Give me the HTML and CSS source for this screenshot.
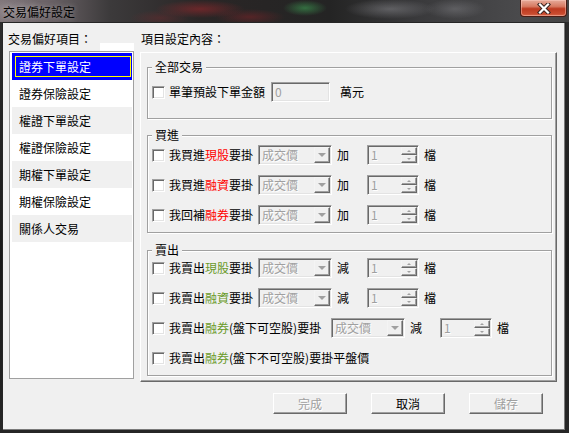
FILE: index.html
```html
<!DOCTYPE html>
<html lang="zh-Hant">
<head>
<meta charset="utf-8">
<title>交易偏好設定</title>
<link rel="stylesheet" href="styles.css">
</head>
<body>
<div class="screen">
  <div class="titlebar">
    <span class="title">交易偏好設定</span>
    <div class="close">
      <svg width="14" height="11" viewBox="0 0 14 11">
        <path d="M3 1.5 L11 9.5 M11 1.5 L3 9.5" stroke="#3a2420" stroke-width="4.2" stroke-linecap="square" fill="none"/>
        <path d="M3 1.5 L11 9.5 M11 1.5 L3 9.5" stroke="#ffffff" stroke-width="2.2" stroke-linecap="square" fill="none"/>
      </svg>
    </div>
  </div>
  <div class="window">
    <div class="main">
      <div class="col-left">
        <div class="head-left">
          <span class="col-label left-label">交易偏好項目：</span>
          <span class="patch"></span>
        </div>
        <ul class="list">
          <li class="item sel"><span>證券下單設定</span></li>
          <li class="item">證券保險設定</li>
          <li class="item alt">權證下單設定</li>
          <li class="item">權證保險設定</li>
          <li class="item alt">期權下單設定</li>
          <li class="item">期權保險設定</li>
          <li class="item alt">關係人交易</li>
        </ul>
      </div>
      <div class="col-right">
        <div class="head-right">
          <span class="col-label">項目設定內容：</span>
        </div>
        <div class="panel">
          <div class="group g1">
            <span class="legend">全部交易</span>
            <div class="rows">
              <div class="row">
                <span class="cb"></span>
                <span class="lbl w0">單筆預設下單金額</span>
                <span class="field money">0</span>
                <span class="lbl">萬元</span>
              </div>
            </div>
          </div>
          <div class="group g2">
            <span class="legend">買進</span>
            <div class="rows">
              <div class="row">
                <span class="cb"></span>
                <span class="lbl w1">我買進<em class="red">現股</em>要掛</span>
                <span class="combo"><span class="ctext">成交價</span><span class="arrow"><i class="tri"></i></span></span>
                <span class="op">加</span>
                <span class="spin"><span class="stext">1</span><span class="sbtns"><span class="sb"><i class="tri-s up"></i></span><span class="sb"><i class="tri-s"></i></span></span></span>
                <span class="lbl">檔</span>
              </div>
              <div class="row">
                <span class="cb"></span>
                <span class="lbl w1">我買進<em class="red">融資</em>要掛</span>
                <span class="combo"><span class="ctext">成交價</span><span class="arrow"><i class="tri"></i></span></span>
                <span class="op">加</span>
                <span class="spin"><span class="stext">1</span><span class="sbtns"><span class="sb"><i class="tri-s up"></i></span><span class="sb"><i class="tri-s"></i></span></span></span>
                <span class="lbl">檔</span>
              </div>
              <div class="row">
                <span class="cb"></span>
                <span class="lbl w1">我回補<em class="red">融券</em>要掛</span>
                <span class="combo"><span class="ctext">成交價</span><span class="arrow"><i class="tri"></i></span></span>
                <span class="op">加</span>
                <span class="spin"><span class="stext">1</span><span class="sbtns"><span class="sb"><i class="tri-s up"></i></span><span class="sb"><i class="tri-s"></i></span></span></span>
                <span class="lbl">檔</span>
              </div>
            </div>
          </div>
          <div class="group g3">
            <span class="legend">賣出</span>
            <div class="rows">
              <div class="row">
                <span class="cb"></span>
                <span class="lbl w1">我賣出<em class="green">現股</em>要掛</span>
                <span class="combo"><span class="ctext">成交價</span><span class="arrow"><i class="tri"></i></span></span>
                <span class="op">減</span>
                <span class="spin"><span class="stext">1</span><span class="sbtns"><span class="sb"><i class="tri-s up"></i></span><span class="sb"><i class="tri-s"></i></span></span></span>
                <span class="lbl">檔</span>
              </div>
              <div class="row">
                <span class="cb"></span>
                <span class="lbl w1">我賣出<em class="green">融資</em>要掛</span>
                <span class="combo"><span class="ctext">成交價</span><span class="arrow"><i class="tri"></i></span></span>
                <span class="op">減</span>
                <span class="spin"><span class="stext">1</span><span class="sbtns"><span class="sb"><i class="tri-s up"></i></span><span class="sb"><i class="tri-s"></i></span></span></span>
                <span class="lbl">檔</span>
              </div>
              <div class="row">
                <span class="cb"></span>
                <span class="lbl w2">我賣出<em class="green">融券</em>(盤下可空股)要掛</span>
                <span class="combo"><span class="ctext">成交價</span><span class="arrow"><i class="tri"></i></span></span>
                <span class="op">減</span>
                <span class="spin"><span class="stext">1</span><span class="sbtns"><span class="sb"><i class="tri-s up"></i></span><span class="sb"><i class="tri-s"></i></span></span></span>
                <span class="lbl">檔</span>
              </div>
              <div class="row">
                <span class="cb"></span>
                <span class="lbl">我賣出<em class="green">融券</em>(盤下不可空股)要掛平盤價</span>
              </div>
            </div>
          </div>
        </div>
      </div>
    </div>
    <div class="buttons">
      <span class="btn disabled">完成</span>
      <span class="btn">取消</span>
      <span class="btn disabled">儲存</span>
    </div>
  </div>
</div>
</body>
</html>
```

FILE: styles.css
```css
* { box-sizing: border-box; margin: 0; padding: 0; }

body {
  margin: 0;
  background: #1b1b1b;
  font-family: "Noto Sans CJK TC", "Liberation Sans", sans-serif;
  font-size: 12px;
  color: #000;
}

.screen {
  width: 569px;
  height: 433px;
  overflow: hidden;
  background: linear-gradient(180deg, #2e2e2e 0, #1a1a1a 60%, #262626 100%);
}

.titlebar {
  height: 22px;
  display: flex;
  justify-content: space-between;
  align-items: flex-start;
  background:
    radial-gradient(ellipse 45px 9px at 200px 9px, rgba(160, 40, 45, 0.55), transparent),
    radial-gradient(ellipse 35px 8px at 250px 17px, rgba(140, 35, 40, 0.45), transparent),
    radial-gradient(ellipse 30px 8px at 160px 18px, rgba(130, 40, 45, 0.35), transparent),
    radial-gradient(ellipse 22px 8px at 305px 8px, rgba(60, 150, 80, 0.65), transparent),
    radial-gradient(ellipse 45px 10px at 390px 9px, rgba(150, 150, 155, 0.45), transparent),
    radial-gradient(ellipse 30px 10px at 455px 9px, rgba(140, 140, 145, 0.4), transparent),
    radial-gradient(ellipse 40px 12px at 10px 10px, rgba(160, 150, 155, 0.5), transparent),
    linear-gradient(90deg, #7e7478 0, #6a6266 50px, #3c3a3b 110px, #2a2626 200px, #242424 330px, #3a3a3c 420px, #4a4a4c 520px, #444 569px);
}

.title {
  margin: 4px 0 0 3px;
  line-height: 15px;
  color: #000;
  text-shadow: 0 0 5px rgba(220, 220, 220, 0.55);
}

.close {
  width: 47px;
  height: 17px;
  margin-right: 2px;
  border: 1px solid #4a1c14;
  border-top: none;
  border-radius: 0 0 4px 4px;
  background: linear-gradient(180deg, #e6ab9a 0, #d77a62 40%, #bd3a20 55%, #c84a2e 85%, #d8674a 100%);
  box-shadow: inset 0 0 0 1px rgba(255, 210, 200, 0.45);
  display: flex;
  align-items: center;
  justify-content: center;
}

.window {
  margin-left: 2px;
  width: 564px;
  height: 409px;
  background: #f0f0f0;
  border: 1px solid #262626;
  box-shadow: inset -1px -1px 0 #7a7a7a;
  display: flex;
  flex-direction: column;
}

.main {
  display: flex;
  gap: 6px;
  padding: 9px 0 0 6px;
}

.col-left { width: 125px; }
.col-right { width: 417px; }

.head-left {
  display: flex;
  justify-content: space-between;
  height: 19px;
}

.head-right {
  height: 20px;
  padding-left: 1px;
}

.col-label {
  display: block;
  height: 14px;
  line-height: 14px;
  white-space: nowrap;
}

.left-label { margin-left: -1px; }

.patch {
  width: 34px;
  height: 8px;
  background: #fff;
  align-self: flex-end;
}

.list {
  list-style: none;
  height: 328px;
  border: 1px solid #a0a0a0;
  background: #fff;
  padding: 1px 1px 0 2px;
}

.item {
  height: 27px;
  line-height: 27px;
  padding-left: 7px;
  white-space: nowrap;
}

.item.alt { background: #f0f0f0; }

.item.sel {
  background: #0000ff;
  color: #fff;
  padding: 3px 1px 3px 3px;
}

.item.sel span {
  display: block;
  height: 21px;
  line-height: 19px;
  border: 1px solid #ffff00;
  padding-left: 3px;
}

.panel {
  height: 330px;
  border: 1px solid;
  border-color: #ffffff #696969 #696969 #ffffff;
  box-shadow: inset -1px -1px 0 #a0a0a0;
  padding: 0 4px 0 6px;
}

.group {
  width: 405px;
  border: 1px solid #a0a0a0;
  box-shadow: inset 1px 1px 0 #fff, 1px 1px 0 #fff;
}

.g1 { margin-top: 14px; height: 52px; }
.g2 { margin-top: 16px; height: 98px; }
.g3 { margin-top: 17px; height: 126px; }

.legend {
  display: block;
  width: max-content;
  height: 14px;
  line-height: 14px;
  margin: -8px 0 0 4px;
  padding: 0 3px;
  background: #f0f0f0;
}

.rows {
  display: flex;
  flex-direction: column;
  gap: 10px;
  padding-left: 4px;
}

.g1 .rows { margin-top: 8px; }
.g2 .rows { margin-top: 3px; }
.g3 .rows { margin-top: 1px; }

.row {
  display: flex;
  align-items: center;
  height: 20px;
}

.cb {
  width: 13px;
  height: 13px;
  margin-right: 4px;
  background: #fff;
  border: 1px solid;
  border-color: #a0a0a0 #ffffff #ffffff #a0a0a0;
  box-shadow: inset 1px 1px 0 #696969, inset -1px -1px 0 #e3e3e3;
}

.lbl {
  line-height: 14px;
  white-space: nowrap;
}

.lbl em { font-style: normal; }
.red { color: #ff0000; }
.green { color: #6a9a2a; }

.w0 { width: 102px; }
.w1 { width: 89px; }
.w2 { width: 162px; }

.field,
.combo,
.spin {
  height: 20px;
  background: #f0f0f0;
  border: 1px solid;
  border-color: #a0a0a0 #ffffff #ffffff #a0a0a0;
  box-shadow: inset 1px 1px 0 #696969, inset -1px -1px 0 #e3e3e3;
  padding: 1px;
  display: flex;
  align-items: stretch;
  color: #a0a0a0;
  line-height: 16px;
}

.money {
  width: 59px;
  margin-right: 10px;
  padding-left: 3px;
}

.combo {
  width: 74px;
  margin-right: 5px;
}

.ctext {
  flex: 1;
  padding-left: 2px;
  line-height: 16px;
  font-size: 12px;
  text-shadow: 1px 1px 0 #fff;
}

.arrow {
  width: 16px;
  border: 1px solid;
  border-color: #f4f4f4 #696969 #696969 #f4f4f4;
  box-shadow: inset -1px -1px 0 #a0a0a0;
  background: #f0f0f0;
  display: flex;
  align-items: center;
  justify-content: center;
}

.tri {
  display: block;
  width: 0;
  height: 0;
  border-left: 4px solid transparent;
  border-right: 4px solid transparent;
  border-top: 4px solid #a0a0a0;
}

.op {
  width: 30px;
  line-height: 14px;
}

.spin {
  width: 52px;
  margin-right: 5px;
}

.stext {
  flex: 1;
  padding-left: 2px;
  text-shadow: 1px 1px 0 #fff;
}

.sbtns {
  width: 16px;
  display: flex;
  flex-direction: column;
}

.sb {
  flex: 1;
  border: 1px solid;
  border-color: #f4f4f4 #696969 #696969 #f4f4f4;
  box-shadow: inset -1px -1px 0 #a0a0a0;
  background: #f0f0f0;
  display: flex;
  align-items: center;
  justify-content: center;
}

.tri-s {
  display: block;
  width: 0;
  height: 0;
  border-left: 2px solid transparent;
  border-right: 2px solid transparent;
  border-top: 2px solid #a0a0a0;
}

.tri-s.up {
  border-top: none;
  border-bottom: 2px solid #a0a0a0;
}

.buttons {
  display: flex;
  justify-content: flex-end;
  gap: 24px;
  padding-right: 22px;
  margin-top: 11px;
}

.btn {
  width: 74px;
  height: 21px;
  border: 1px solid;
  border-color: #ffffff #696969 #696969 #ffffff;
  box-shadow: inset -1px -1px 0 #a0a0a0;
  background: #f0f0f0;
  display: flex;
  align-items: center;
  justify-content: center;
  line-height: 14px;
  color: #000;
}

.btn.disabled {
  color: #a0a0a0;
  text-shadow: 1px 1px 0 #fff;
}
```
